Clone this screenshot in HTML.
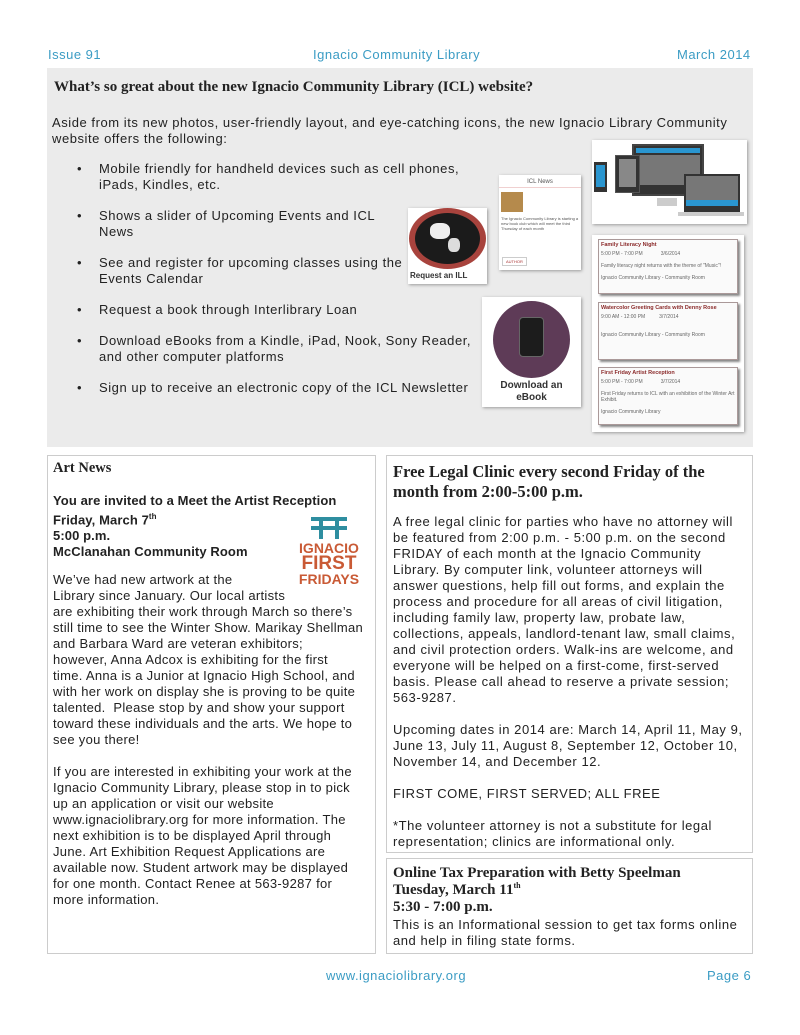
<!DOCTYPE html>
<html><head><meta charset="utf-8"><style>
*{margin:0;padding:0;box-sizing:border-box}
body{width:800px;height:1035px;background:#fff;position:relative;font-family:"Liberation Sans",sans-serif;color:#222;font-size:12.6px;overflow:hidden}
.a{position:absolute;white-space:nowrap}
.h{color:#3b9cc4;font-size:13px;letter-spacing:0.5px}
.t{font-size:13px;line-height:16px;letter-spacing:0.55px}
.ser{font-family:"Liberation Serif",serif;font-weight:bold}
.box{position:absolute;border:1px solid #ccc;background:#fff}
.img{position:absolute;background:#fff;box-shadow:1px 1px 3px #999}
.ev{position:absolute;left:6px;right:6px;border:1px solid #a99;box-shadow:2px 2px 2px #888;background:#fafafa;font-size:5px;color:#666;padding:2px}
.ev b{color:#8b2a2a;display:block;font-size:5.5px;margin-bottom:3px}
</style></head><body>
<div class="a h" style="left:48px;top:47px">Issue 91</div>
<div class="a h" style="left:313px;top:47px">Ignacio Community Library</div>
<div class="a h" style="left:677px;top:47px">March 2014</div>

<div style="position:absolute;left:47px;top:68px;width:706px;height:379px;background:#ebebeb"></div>
<div class="a ser" style="left:54px;top:79px;font-size:15px">What’s so great about the new Ignacio Community Library (ICL) website?</div>
<div class="a t" style="left:52px;top:115px">Aside from its new photos, user-friendly layout, and eye-catching icons, the new Ignacio Library Community<br>website offers the following:</div>
<div class="a t" style="left:77px;top:161px">•</div><div class="a t" style="left:99px;top:161px">Mobile friendly for handheld devices such as cell phones,<br>iPads, Kindles, etc.</div>
<div class="a t" style="left:77px;top:208px">•</div><div class="a t" style="left:99px;top:208px">Shows a slider of Upcoming Events and ICL<br>News</div>
<div class="a t" style="left:77px;top:255px">•</div><div class="a t" style="left:99px;top:255px">See and register for upcoming classes using the<br>Events Calendar</div>
<div class="a t" style="left:77px;top:302px">•</div><div class="a t" style="left:99px;top:302px">Request a book through Interlibrary Loan</div>
<div class="a t" style="left:77px;top:333px">•</div><div class="a t" style="left:99px;top:333px">Download eBooks from a Kindle, iPad, Nook, Sony Reader,<br>and other computer platforms</div>
<div class="a t" style="left:77px;top:380px">•</div><div class="a t" style="left:99px;top:380px">Sign up to receive an electronic copy of the ICL Newsletter</div>

<div class="img" style="left:499px;top:175px;width:82px;height:95px;font-size:4px;color:#555">
<div style="text-align:center;font-size:6px;margin-top:4px;border-bottom:1px solid #f0d0d0;padding-bottom:2px">ICL News</div>
<div style="margin:4px 2px;width:22px;height:20px;background:#b58a4c"></div>
<div style="margin:0 2px">The Ignacio Community Library is starting a new book club which will meet the third Thursday of each month</div>
<div style="position:absolute;left:3px;bottom:4px;border:1px solid #ccc;color:#a33;padding:1px 3px">AUTHOR</div>
</div>
<div class="img" style="left:408px;top:208px;width:79px;height:76px">
<div style="position:absolute;left:1px;top:0;width:77px;height:61px;border-radius:50%;background:#a8433d"></div>
<div style="position:absolute;left:7px;top:5px;width:65px;height:51px;border-radius:50%;background:#1b1b1b"></div>
<div style="position:absolute;left:22px;top:15px;width:20px;height:16px;border-radius:40%;background:#eee"></div>
<div style="position:absolute;left:40px;top:30px;width:12px;height:14px;border-radius:40%;background:#ddd"></div>
<div class="a" style="left:2px;top:63px;font-size:8px;font-weight:bold;color:#333">Request an ILL</div>
</div>
<div class="img" style="left:592px;top:140px;width:155px;height:84px">
<div style="position:absolute;left:40px;top:4px;width:72px;height:52px;background:#333;border:2px solid #444"><div style="margin:2px;height:5px;background:#2a96d0"></div><div style="margin:2px;height:30px;background:#777"></div></div>
<div style="position:absolute;left:65px;top:58px;width:20px;height:8px;background:#ccc"></div>
<div style="position:absolute;left:23px;top:15px;width:25px;height:38px;background:#333;border:1px solid #555"><div style="margin:3px;height:28px;background:#888"></div></div>
<div style="position:absolute;left:2px;top:22px;width:13px;height:30px;background:#333"><div style="margin:3px 2px;height:22px;background:#2a96d0"></div></div>
<div style="position:absolute;left:92px;top:34px;width:56px;height:38px;background:#333"><div style="margin:2px;height:30px;background:#777;border-bottom:6px solid #2a96d0"></div></div>
<div style="position:absolute;left:86px;top:72px;width:66px;height:4px;background:#ccc"></div>
</div>
<div class="img" style="left:592px;top:235px;width:152px;height:197px">
<div class="ev" style="top:4px;height:55px"><b>Family Literacy Night</b>5:00 PM - 7:00 PM &nbsp;&nbsp;&nbsp;&nbsp;&nbsp;&nbsp;&nbsp;&nbsp;&nbsp;&nbsp;&nbsp; 3/6/2014<br><br>Family literacy night returns with the theme of "Music"!<br><br>Ignacio Community Library - Community Room</div>
<div class="ev" style="top:67px;height:58px"><b>Watercolor Greeting Cards with Denny Rose</b>9:00 AM - 12:00 PM &nbsp;&nbsp;&nbsp;&nbsp;&nbsp;&nbsp;&nbsp;&nbsp; 3/7/2014<br><br><br>Ignacio Community Library - Community Room</div>
<div class="ev" style="top:132px;height:58px"><b>First Friday Artist Reception</b>5:00 PM - 7:00 PM &nbsp;&nbsp;&nbsp;&nbsp;&nbsp;&nbsp;&nbsp;&nbsp;&nbsp;&nbsp;&nbsp; 3/7/2014<br><br>First Friday returns to ICL with an exhibition of the Winter Art Exhibit.<br><br>Ignacio Community Library</div>
</div>
<div class="img" style="left:482px;top:297px;width:99px;height:110px">
<div style="position:absolute;left:11px;top:4px;width:77px;height:77px;border-radius:50%;background:#5e3b57"></div>
<div style="position:absolute;left:37px;top:20px;width:25px;height:40px;border-radius:4px;background:#1c1c1c;border:1px solid #666"></div>
<div class="a" style="left:0;width:99px;top:83px;font-size:10px;font-weight:bold;color:#333;text-align:center;line-height:12px">Download an<br>eBook</div>
</div>

<div class="box" style="left:47px;top:455px;width:329px;height:499px"></div>
<div class="a ser" style="left:53px;top:460px;font-size:14.5px">Art News</div>
<div class="a t" style="left:53px;top:493px;font-weight:bold;letter-spacing:0.1px">You are invited to a Meet the Artist Reception<br>Friday, March 7<sup style="font-size:8px">th</sup><br>5:00 p.m.<br>McClanahan Community Room</div>
<div class="a t" style="left:53px;top:572px;letter-spacing:0.3px">We’ve had new artwork at the<br>Library since January. Our local artists<br>are exhibiting their work through March so there’s<br>still time to see the Winter Show. Marikay Shellman<br>and Barbara Ward are veteran exhibitors;<br>however, Anna Adcox is exhibiting for the first<br>time. Anna is a Junior at Ignacio High School, and<br>with her work on display she is proving to be quite<br>talented. &nbsp;Please stop by and show your support<br>toward these individuals and the arts. We hope to<br>see you there!<br><br>If you are interested in exhibiting your work at the<br>Ignacio Community Library, please stop in to pick<br>up an application or visit our website<br>www.ignaciolibrary.org for more information. The<br>next exhibition is to be displayed April through<br>June. Art Exhibition Request Applications are<br>available now. Student artwork may be displayed<br>for one month. Contact Renee at 563-9287 for<br>more information.</div>
<div class="a" style="left:309px;top:517px;width:40px;height:22px">
<div style="position:absolute;left:2px;top:0;width:36px;height:4px;background:#2e8ea0"></div>
<div style="position:absolute;left:2px;top:9px;width:36px;height:4px;background:#2e8ea0"></div>
<div style="position:absolute;left:10px;top:0;width:4px;height:22px;background:#2e8ea0"></div>
<div style="position:absolute;left:26px;top:0;width:4px;height:22px;background:#2e8ea0"></div>
</div>
<div class="a" style="left:290px;top:541px;color:#c95a35;font-size:14px;line-height:14px;font-weight:bold;text-align:center;width:78px">IGNACIO<br><span style="font-size:19px;line-height:17px">FIRST</span><br>FRIDAYS</div>

<div class="box" style="left:386px;top:455px;width:367px;height:398px"></div>
<div class="a ser" style="left:393px;top:462px;font-size:16.5px;line-height:20px">Free Legal Clinic every second Friday of the<br>month from 2:00-5:00 p.m.</div>
<div class="a t" style="left:393px;top:514px">A free legal clinic for parties who have no attorney will<br>be featured from 2:00 p.m. - 5:00 p.m. on the second<br>FRIDAY of each month at the Ignacio Community<br>Library. By computer link, volunteer attorneys will<br>answer questions, help fill out forms, and explain the<br>process and procedure for all areas of civil litigation,<br>including family law, property law, probate law,<br>collections, appeals, landlord-tenant law, small claims,<br>and civil protection orders. Walk-ins are welcome, and<br>everyone will be helped on a first-come, first-served<br>basis. Please call ahead to reserve a private session;<br>563-9287.<br><br>Upcoming dates in 2014 are: March 14, April 11, May 9,<br>June 13, July 11, August 8, September 12, October 10,<br>November 14, and December 12.<br><br>FIRST COME, FIRST SERVED; ALL FREE<br><br>*The volunteer attorney is not a substitute for legal<br>representation; clinics are informational only.</div>

<div class="box" style="left:386px;top:858px;width:367px;height:96px"></div>
<div class="a ser" style="left:393px;top:865px;font-size:15px;line-height:17px">Online Tax Preparation with Betty Speelman<br>Tuesday, March 11<sup style="font-size:8px;line-height:0">th</sup><br>5:30 - 7:00 p.m.</div>
<div class="a t" style="left:393px;top:917px">This is an Informational session to get tax forms online<br>and help in filing state forms.</div>

<div class="a h" style="left:326px;top:968px">www.ignaciolibrary.org</div>
<div class="a h" style="left:707px;top:968px">Page 6</div>
</body></html>
